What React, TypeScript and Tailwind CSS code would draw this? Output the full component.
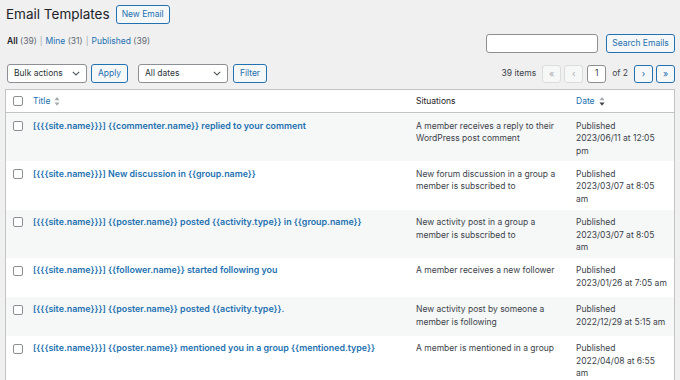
import React from "react"

type Row = {
  title: string
  situation: string[]
  date: string[]
}

const rows: Row[] = [
  {
    title: "[{{{site.name}}}] {{commenter.name}} replied to your comment",
    situation: ["A member receives a reply to their", "WordPress post comment"],
    date: ["Published", "2023/06/11 at 12:05", "pm"],
  },
  {
    title: "[{{{site.name}}}] New discussion in {{group.name}}",
    situation: ["New forum discussion in a group a", "member is subscribed to"],
    date: ["Published", "2023/03/07 at 8:05", "am"],
  },
  {
    title: "[{{{site.name}}}] {{poster.name}} posted {{activity.type}} in {{group.name}}",
    situation: ["New activity post in a group a", "member is subscribed to"],
    date: ["Published", "2023/03/07 at 8:05", "am"],
  },
  {
    title: "[{{{site.name}}}] {{follower.name}} started following you",
    situation: ["A member receives a new follower"],
    date: ["Published", "2023/01/26 at 7:05 am"],
  },
  {
    title: "[{{{site.name}}}] {{poster.name}} posted {{activity.type}}.",
    situation: ["New activity post by someone a", "member is following"],
    date: ["Published", "2022/12/29 at 5:15 am"],
  },
  {
    title: "[{{{site.name}}}] {{poster.name}} mentioned you in a group {{mentioned.type}}",
    situation: ["A member is mentioned in a group"],
    date: ["Published", "2022/04/08 at 6:55", "am"],
  },
]

const SortIcon = ({ active }: { active?: boolean }) => (
  <svg width="6" height="9" viewBox="0 0 6 9" className="ml-[4px]">
    <polygon points="3,0 5.5,3.3 0.5,3.3" fill="#a7aaad" />
    <polygon points="0.5,5.5 5.5,5.5 3,8.8" fill={active ? "#3c434a" : "#a7aaad"} />
  </svg>
)

const Chevron = () => (
  <svg width="8" height="5" viewBox="0 0 8 5">
    <polyline points="0.8,0.8 4,4 7.2,0.8" fill="none" stroke="#50575e" strokeWidth="1.1" />
  </svg>
)

const Checkbox = () => (
  <div className="w-[10px] h-[10px] rounded-[2px] border border-[#8c8f94] bg-white" />
)

const Select = ({ label, width }: { label: string; width: string }) => (
  <div
    className={`${width} h-[19px] flex items-center justify-between pl-[6px] pr-[6px] bg-white border border-[#8c8f94] rounded-[3px] text-[8.5px] text-[#2c3338]`}
  >
    <span>{label}</span>
    <Chevron />
  </div>
)

const Button = ({ label, width }: { label: string; width: string }) => (
  <div
    className={`${width} h-[19px] flex items-center justify-center bg-[#f6f7f7] border border-[#2271b1] rounded-[3px] text-[8.5px] text-[#2271b1]`}
  >
    {label}
  </div>
)

const PageBtn = ({ glyph, disabled }: { glyph: string; disabled?: boolean }) => (
  <div
    className={
      disabled
        ? "w-[19px] h-[18px] flex items-center justify-center bg-[#f6f7f7] border border-[#dcdcde] rounded-[3px] text-[9px] text-[#a7aaad]"
        : "w-[19px] h-[18px] flex items-center justify-center bg-[#f6f7f7] border border-[#2271b1] rounded-[3px] text-[9px] text-[#2271b1]"
    }
  >
    {glyph}
  </div>
)

export default function App() {
  return (
    <div
      className="w-[680px] h-[380px] overflow-hidden bg-[#f0f0f1] pl-[5px] pr-[5px] text-[#3c434a]"
      style={{ fontFamily: "Inter, 'Liberation Sans', sans-serif" }}
    >
      {/* heading */}
      <div className="pt-[5px] h-[24px] flex items-center gap-[6px]">
        <h1 className="ml-[1px] text-[13.5px] leading-[19px] text-[#1d2327]">Email Templates</h1>
        <Button label="New Email" width="w-[54px]" />
      </div>

      {/* views + search */}
      <div className="mt-[10px] flex items-start justify-between">
        <div className="ml-[2px] mt-[1px] leading-[12px] text-[8.5px] text-[#646970] flex gap-[3px]">
          <span>
            <span className="font-semibold text-[#1d2327]">All</span> (39)
          </span>
          <span className="text-[#a7aaad]">|</span>
          <span>
            <span className="text-[#2271b1]">Mine</span> (31)
          </span>
          <span className="text-[#a7aaad]">|</span>
          <span>
            <span className="text-[#2271b1]">Published</span> (39)
          </span>
        </div>
        <div className="flex items-center gap-[8px]">
          <div className="w-[112px] h-[19px] bg-white border border-[#8c8f94] rounded-[3px]" />
          <Button label="Search Emails" width="w-[69px]" />
        </div>
      </div>

      {/* tablenav */}
      <div className="mt-[11px] flex items-center justify-between">
        <div className="ml-[2px] flex items-center">
          <Select label="Bulk actions" width="w-[80px]" />
          <div className="ml-[4px]">
            <Button label="Apply" width="w-[37px]" />
          </div>
          <div className="ml-[10px]">
            <Select label="All dates" width="w-[90px]" />
          </div>
          <div className="ml-[5px]">
            <Button label="Filter" width="w-[34px]" />
          </div>
        </div>
        <div className="flex items-center text-[8.5px] text-[#3c434a]">
          <span className="mr-[6px]">39 items</span>
          <div className="flex items-center gap-[3px]">
            <PageBtn glyph="«" disabled />
            <PageBtn glyph="‹" disabled />
            <div className="ml-[1px] w-[19px] h-[18px] flex items-center justify-center bg-white border border-[#8c8f94] rounded-[3px] text-[8.5px]">
              1
            </div>
            <span className="mx-[3px]">of 2</span>
            <PageBtn glyph="›" />
            <PageBtn glyph="»" />
          </div>
        </div>
      </div>

      {/* table */}
      <div className="mt-[6px] bg-white border border-[#c3c4c7] text-[8.5px]">
        <div className="grid grid-cols-[22px_383px_160px_1fr] h-[23px] items-center border-b border-[#c3c4c7]">
          <div className="pl-[7px]">
            <Checkbox />
          </div>
          <div className="pl-[5px] flex items-center text-[#2271b1]">
            Title
            <SortIcon />
          </div>
          <div className="pl-[5px] text-[#1d2327]">Situations</div>
          <div className="pl-[5px] flex items-center text-[#2271b1]">
            Date
            <SortIcon active />
          </div>
        </div>

        {rows.map((row, i) => (
          <div
            key={i}
            className={
              i % 2 === 0
                ? "grid grid-cols-[22px_383px_160px_1fr] bg-[#f6f7f7] leading-[12.5px]"
                : "grid grid-cols-[22px_383px_160px_1fr] bg-white leading-[12.5px]"
            }
          >
            <div className="pl-[7px] pt-[6.5px] h-full">
              <div className="h-[12.5px] flex items-center">
                <Checkbox />
              </div>
            </div>
            <div className="pl-[5px] pt-[6.5px] pb-[4.3px]">
              <div className="font-semibold text-[8.9px] text-[#2271b1] whitespace-nowrap">{row.title}</div>
              <div className="h-[15.7px]" />
            </div>
            <div className="pl-[5px] pt-[6.5px] pb-[4.3px]">
              {row.situation.map((line) => (
                <div key={line} className="whitespace-nowrap">
                  {line}
                </div>
              ))}
            </div>
            <div className="pl-[5px] pt-[6.5px] pb-[4.3px]">
              {row.date.map((line) => (
                <div key={line} className="whitespace-nowrap">
                  {line}
                </div>
              ))}
            </div>
          </div>
        ))}
      </div>
    </div>
  )
}
